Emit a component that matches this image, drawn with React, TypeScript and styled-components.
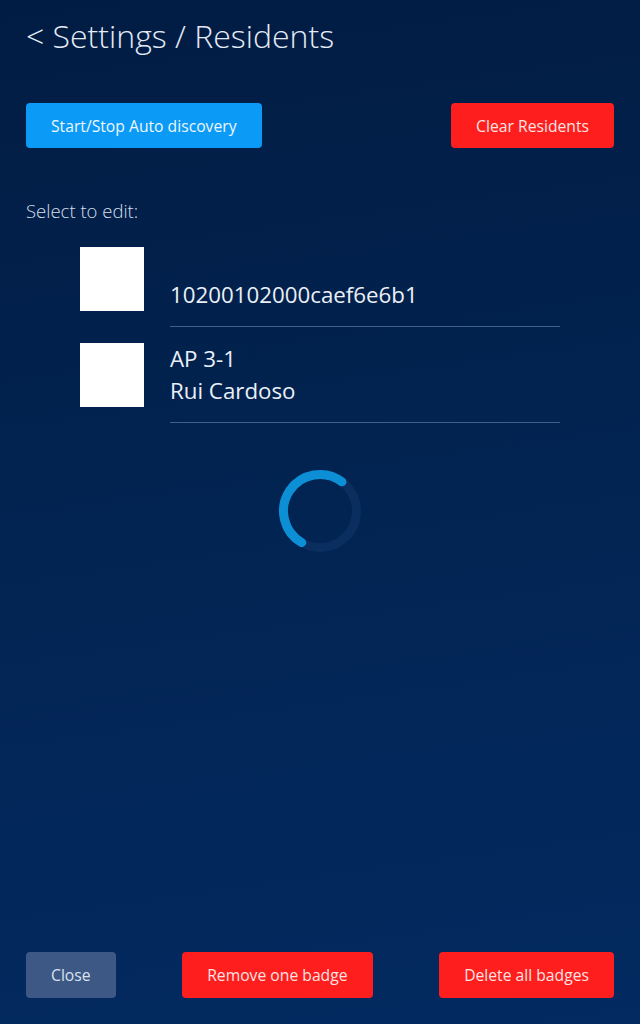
import React from "react";
import styled, { createGlobalStyle } from "styled-components";

const Global = createGlobalStyle`
  html, body { margin: 0; padding: 0; }
  body {
    font-family: "Open Sans", "Noto Sans", sans-serif;
    background: #022048;
  }
  * { box-sizing: border-box; }
`;

const Page = styled.div`
  min-height: 100vh;
  display: flex;
  flex-direction: column;
  padding: 14px 26px 26px;
  background: linear-gradient(172deg, #011c43 0%, #022452 50%, #032a61 100%);
  color: #e6edf6;
`;

const Title = styled.h1`
  margin: 0;
  font-size: 32px;
  font-weight: 300;
  line-height: 43px;
  color: #e4ebf4;
`;

const ButtonRow = styled.div<{ $top: number }>`
  display: flex;
  justify-content: space-between;
  align-items: center;
  margin-top: ${(p) => p.$top}px;
`;

type Variant = "blue" | "red" | "gray";

const colors: Record<Variant, { bg: string; fg: string }> = {
  blue: { bg: "#0b9bf6", fg: "#eef6fd" },
  red: { bg: "#fe1e1e", fg: "#fbe3e3" },
  gray: { bg: "#3e5886", fg: "#d9e2ef" },
};

const Button = styled.button<{ $variant: Variant; $h: number }>`
  height: ${(p) => p.$h}px;
  padding: 0 25px;
  border: none;
  border-radius: 4px;
  font-family: "Open Sans", "Noto Sans", sans-serif;
  font-size: 15.7px;
  font-weight: 400;
  background: ${(p) => colors[p.$variant].bg};
  color: ${(p) => colors[p.$variant].fg};
  cursor: pointer;
`;

const Label = styled.div`
  margin-top: 50px;
  font-size: 18.5px;
  font-weight: 300;
  line-height: 25px;
  color: #d5dfec;
`;

const List = styled.div`
  margin-top: 24px;
  padding-left: 54px;
  display: flex;
  flex-direction: column;
  gap: 16px;
`;

const Row = styled.div`
  display: flex;
  align-items: flex-start;
`;

const Thumb = styled.div`
  width: 64px;
  height: 64px;
  background: #ffffff;
  margin-right: 26px;
  flex: none;
`;

const Info = styled.div`
  width: 390px;
  padding-bottom: 15px;
  border-bottom: 1px solid rgba(140, 170, 210, 0.45);
  font-size: 22.3px;
  line-height: 32px;
  color: #eaf0f7;
`;

const Line = styled.div`
  height: 32px;
  white-space: nowrap;
`;

const SpinnerWrap = styled.div`
  display: flex;
  justify-content: center;
  margin-top: 46px;
`;

const Spacer = styled.div`
  flex: 1;
`;

function Spinner() {
  const cx = 42;
  const cy = 42;
  const r = 36.5;
  const a1 = (-53 * Math.PI) / 180;
  const a2 = (120 * Math.PI) / 180;
  const x1 = cx + r * Math.cos(a1);
  const y1 = cy + r * Math.sin(a1);
  const x2 = cx + r * Math.cos(a2);
  const y2 = cy + r * Math.sin(a2);
  return (
    <svg width="84" height="84" viewBox="0 0 84 84">
      <circle cx={cx} cy={cy} r={r} fill="none" stroke="rgba(60,110,170,0.15)" strokeWidth="9" />
      <path
        d={`M ${x1} ${y1} A ${r} ${r} 0 1 0 ${x2} ${y2}`}
        fill="none"
        stroke="#0d8fd6"
        strokeWidth="9"
        strokeLinecap="round"
      />
    </svg>
  );
}

export default function App() {
  return (
    <>
      <Global />
      <Page>
        <Title>&lt; Settings / Residents</Title>
        <ButtonRow $top={46}>
          <Button $variant="blue" $h={45}>Start/Stop Auto discovery</Button>
          <Button $variant="red" $h={45}>Clear Residents</Button>
        </ButtonRow>
        <Label>Select to edit:</Label>
        <List>
          <Row>
            <Thumb />
            <Info>
              <Line></Line>
              <Line>10200102000caef6e6b1</Line>
            </Info>
          </Row>
          <Row>
            <Thumb />
            <Info>
              <Line>AP 3-1</Line>
              <Line>Rui Cardoso</Line>
            </Info>
          </Row>
        </List>
        <SpinnerWrap>
          <Spinner />
        </SpinnerWrap>
        <Spacer />
        <ButtonRow $top={0}>
          <Button $variant="gray" $h={46}>Close</Button>
          <Button $variant="red" $h={46}>Remove one badge</Button>
          <Button $variant="red" $h={46}>Delete all badges</Button>
        </ButtonRow>
      </Page>
    </>
  );
}
